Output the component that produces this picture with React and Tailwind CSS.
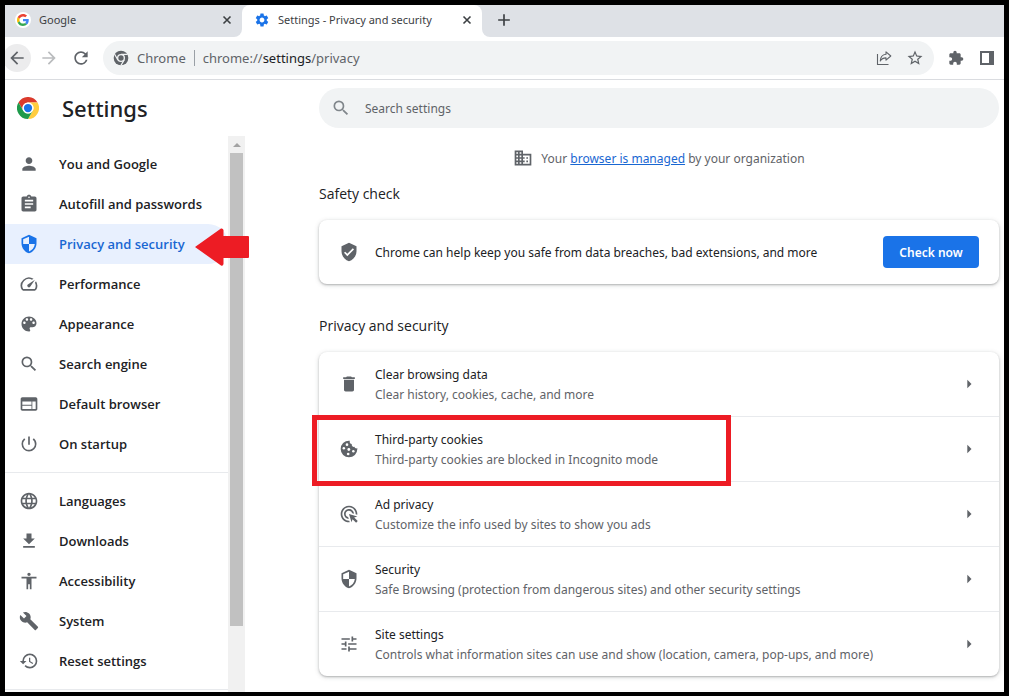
import { useState } from "react";
import clsx from "clsx";
import {
  MdAccessibility,
  MdAdd,
  MdAdsClick,
  MdArrowBack,
  MdArrowForward,
  MdArrowRight,
  MdAssignment,
  MdBuild,
  MdDelete,
  MdDomain,
  MdExtension,
  MdFileDownload,
  MdLanguage,
  MdPerson,
  MdPowerSettingsNew,
  MdRefresh,
  MdRestore,
  MdSearch,
  MdSecurity,
  MdSettings,
  MdSpeed,
  MdStarBorder,
  MdTune,
  MdVerifiedUser,
  MdWeb,
} from "react-icons/md";

const PaletteIcon = ({ className }) => (
  <svg viewBox="0 0 24 24" fill="currentColor" className={className}>
    <path d="M12 3c-4.97 0-9 4.03-9 9s4.03 9 9 9c.83 0 1.5-.67 1.5-1.5 0-.39-.15-.74-.39-1.01-.23-.26-.38-.61-.38-.99 0-.83.67-1.5 1.5-1.5H16c2.76 0 5-2.24 5-5 0-4.42-4.03-8-9-8zm-5.5 9c-.83 0-1.5-.67-1.5-1.5S5.67 9 6.5 9 8 9.67 8 10.5 7.33 12 6.5 12zm3-4C8.67 8 8 7.33 8 6.5S8.67 5 9.5 5s1.5.67 1.5 1.5S10.33 8 9.5 8zm5 0c-.83 0-1.5-.67-1.5-1.5S13.67 5 14.5 5s1.5.67 1.5 1.5S15.33 8 14.5 8zm3 4c-.83 0-1.5-.67-1.5-1.5S16.67 9 17.5 9s1.5.67 1.5 1.5-.67 1.5-1.5 1.5z" />
  </svg>
);

const CookieIcon = ({ className }) => (
  <svg viewBox="0 0 24 24" fill="currentColor" className={className}>
    <path d="M12 2A10 10 0 1 0 22 12V11.200C20.500 11.800 18.800 11 18.600 9.400C16.500 9.800 14.800 8 15.300 6C13.500 5.800 12.300 4 13 2.050Q12.500 2 12 2z" />
    <g fill="#fff">
      <circle cx="9.600" cy="6.800" r="1.600" />
      <circle cx="5.800" cy="11" r="1.500" />
      <circle cx="11.800" cy="12.600" r="1.700" />
      <circle cx="17.200" cy="14.600" r="1.500" />
      <circle cx="11" cy="18" r="1.600" />
    </g>
  </svg>
);

const CloseIcon = () => (
  <svg viewBox="0 0 12 12" className="size-3" fill="none" stroke="currentColor" strokeWidth="1.6">
    <path d="M2.500 2.500L9.500 9.500M9.500 2.500L2.500 9.500" />
  </svg>
);

const GoogleLogo = () => (
  <svg viewBox="0 0 48 48" className="size-3">
    <path fill="#EA4335" d="M24 9.5c3.54 0 6.71 1.22 9.21 3.6l6.85-6.85C35.9 2.38 30.47 0 24 0 14.62 0 6.51 5.38 2.56 13.22l7.98 6.19C12.43 13.72 17.74 9.5 24 9.5z" />
    <path fill="#4285F4" d="M46.98 24.55c0-1.57-.15-3.09-.38-4.55H24v9.02h12.94c-.58 2.96-2.26 5.48-4.78 7.18l7.73 6c4.51-4.18 7.09-10.36 7.09-17.65z" />
    <path fill="#FBBC05" d="M10.53 28.59c-.48-1.45-.76-2.99-.76-4.59s.27-3.14.76-4.59l-7.98-6.19C.92 16.46 0 20.12 0 24c0 3.88.92 7.54 2.56 10.78l7.97-6.19z" />
    <path fill="#34A853" d="M24 48c6.48 0 11.93-2.13 15.89-5.81l-7.73-6c-2.15 1.45-4.92 2.3-8.16 2.3-6.26 0-11.57-4.22-13.47-9.91l-7.98 6.19C6.51 42.62 14.62 48 24 48z" />
  </svg>
);

const ChromeLogo = () => (
  <svg viewBox="0 0 48 48" className="size-[22px]">
    <path fill="#DB3A2C" d="M3.2 12A24 24 0 0 1 44.8 12H24A12 12 0 0 0 13.6 30z" />
    <path fill="#FFCD40" d="M44.8 12A24 24 0 0 1 24 48L34.4 30A12 12 0 0 0 24 12z" />
    <path fill="#1E9A4B" d="M24 48A24 24 0 0 1 3.2 12L13.6 30A12 12 0 0 0 34.4 30z" />
    <circle cx="24" cy="24" r="12" fill="#fff" />
    <circle cx="24" cy="24" r="9" fill="#1A73E8" />
  </svg>
);

const ChromeMark = () => (
  <svg viewBox="0 0 48 48" className="size-4">
    <circle cx="24" cy="24" r="22" fill="#5f6368" />
    <path d="M24 13H44M14.5 29.5L4.5 12.2M33.5 29.5L23.5 46.8" stroke="#f1f3f4" strokeWidth="3.5" />
    <circle cx="24" cy="24" r="12" fill="#f1f3f4" />
    <circle cx="24" cy="24" r="8" fill="#5f6368" />
  </svg>
);

const ShareIcon = () => (
  <svg viewBox="0 0 16 16" className="size-4" fill="none" stroke="#5f6368" strokeWidth="1.1">
    <path d="M1.5 4V14.500H12.500" />
    <path d="M10 1.800L14.800 6L10 10.200V7.900C7.500 7.900 5.600 8.800 4.300 11C4.400 7.300 6.300 4.600 10 4.200z" strokeLinejoin="round" />
  </svg>
);

const SidePanelIcon = () => (
  <svg viewBox="0 0 14 14" className="size-3.5" fill="#5f6368">
    <path fillRule="evenodd" d="M0 0h14v14H0zM2 2v10h7V2z" />
  </svg>
);

const menu = [
  { label: "You and Google", icon: MdPerson },
  { label: "Autofill and passwords", icon: MdAssignment },
  { label: "Privacy and security", icon: MdSecurity },
  { label: "Performance", icon: MdSpeed },
  { label: "Appearance", icon: PaletteIcon },
  { label: "Search engine", icon: MdSearch },
  { label: "Default browser", icon: MdWeb },
  { label: "On startup", icon: MdPowerSettingsNew },
];

const advancedMenu = [
  { label: "Languages", icon: MdLanguage },
  { label: "Downloads", icon: MdFileDownload },
  { label: "Accessibility", icon: MdAccessibility },
  { label: "System", icon: MdBuild },
  { label: "Reset settings", icon: MdRestore },
];

const privacyRows = [
  { title: "Clear browsing data", text: "Clear history, cookies, cache, and more", icon: MdDelete },
  { title: "Third-party cookies", text: "Third-party cookies are blocked in Incognito mode", icon: CookieIcon, marked: true },
  { title: "Ad privacy", text: "Customize the info used by sites to show you ads", icon: MdAdsClick },
  { title: "Security", text: "Safe Browsing (protection from dangerous sites) and other security settings", icon: MdSecurity },
  { title: "Site settings", text: "Controls what information sites can use and show (location, camera, pop-ups, and more)", icon: MdTune },
];

const Tab = ({ icon, title }) => (
  <div className="flex h-8 items-center pr-[7px] pb-0.5 pl-2.5 text-[11px] text-[#3c4043]">
    <span className="mr-2 flex size-4 items-center justify-center rounded-full bg-white">{icon}</span>
    <span className="flex-1 whitespace-nowrap">{title}</span>
    <button aria-label={`Close ${title}`} className="p-0.5">
      <CloseIcon />
    </button>
  </div>
);

const TabStrip = () => (
  <div className="flex shrink-0 bg-white">
    <div className="w-[237px] rounded-br-lg bg-[#dee1e6]">
      <Tab icon={<GoogleLogo />} title="Google" />
    </div>
    <div className="w-60 bg-[#dee1e6]">
      <div className="rounded-t-lg bg-white pl-0.5">
        <Tab icon={<MdSettings className="size-4 text-[#1a73e8]" />} title="Settings - Privacy and security" />
      </div>
    </div>
    <div className="flex flex-1 items-center rounded-bl-lg bg-[#dee1e6] pb-0.5 pl-3">
      <button aria-label="New tab">
        <MdAdd className="size-5 text-[#3c4043]" />
      </button>
    </div>
  </div>
);

const Toolbar = () => (
  <div className="flex h-[43px] shrink-0 items-center border-b border-[#dadce0] bg-white pr-2.5 text-[#5f6368]">
    <button aria-label="Back" className="-ml-0.5 flex size-7 items-center justify-center rounded-full bg-[#ececed]">
      <MdArrowBack className="size-5" />
    </button>
    <button aria-label="Forward" className="ml-1.5 p-0.5 text-[#babcbe]">
      <MdArrowForward className="size-5" />
    </button>
    <button aria-label="Reload" className="ml-2 p-0.5">
      <MdRefresh className="size-5" />
    </button>
    <div className="mr-3.5 ml-2.5 flex h-[34px] flex-1 items-center rounded-full bg-[#f1f3f4] px-2.5 text-[13px]">
      <ChromeMark />
      <span className="ml-2 pt-px">Chrome</span>
      <span className="mx-2 h-4 w-px bg-[#9aa0a6]" />
      <span className="flex-1 pt-px">
        chrome://<span className="text-[#202124]">settings</span>/privacy
      </span>
      <button aria-label="Share this page" className="mr-3.5">
        <ShareIcon />
      </button>
      <button aria-label="Bookmark this tab">
        <MdStarBorder className="size-[18px]" />
      </button>
    </div>
    <button aria-label="Extensions" className="mr-4">
      <MdExtension className="size-4" />
    </button>
    <button aria-label="Side panel">
      <SidePanelIcon />
    </button>
  </div>
);

const MenuItem = ({ label, icon: Icon, active, onClick }) => (
  <li className="relative">
    <a
      href="#"
      onClick={onClick}
      className={clsx(
        "flex h-10 items-center gap-5 rounded-r-full pl-3.5 font-['Open_Sans',sans-serif] text-[13px] font-semibold whitespace-nowrap",
        active ? "bg-[#e8f0fe] text-[#1967d2]" : "text-[#202124]"
      )}
    >
      <Icon className={clsx("size-5 shrink-0", active ? "text-[#1a73e8]" : "text-[#5f6368]")} />
      <span className="pt-px">{label}</span>
    </a>
    {active && (
      <svg viewBox="0 0 54 38" className="absolute top-1 left-[190px] z-10 h-[38px] w-[54px]" fill="#ed1c24">
        <path d="M0 19L26 0.5Q28 0 28.500 2V8H53Q54 8 54 9V29Q54 30 53 30H28.500V36Q28 38.500 26 37.500z" />
      </svg>
    )}
  </li>
);

const Sidebar = () => {
  const [selected, setSelected] = useState("Privacy and security");

  const renderItem = (item) => (
    <MenuItem
      key={item.label}
      {...item}
      active={item.label === selected}
      onClick={() => setSelected(item.label)}
    />
  );

  return (
    <aside className="flex w-60 shrink-0 flex-col">
      <div className="flex h-14 shrink-0 items-center gap-[23px] pl-3">
        <ChromeLogo />
        <h1 className="text-[22px] font-medium text-[#202124]">Settings</h1>
      </div>
      <div className="flex min-h-0 flex-1">
        <nav className="flex-1">
          <ul className="py-2">{menu.map(renderItem)}</ul>
          <hr className="border-[#e8eaed]" />
          <ul className="py-2">{advancedMenu.map(renderItem)}</ul>
          <hr className="border-[#e8eaed]" />
        </nav>
        <div className="w-[17px] bg-[#f1f1f1] px-0.5">
          <div className="flex h-[17px] items-center justify-center">
            <svg viewBox="0 0 8 4" className="h-1 w-2" fill="#a3a3a3">
              <path d="M4 0L8 4H0z" />
            </svg>
          </div>
          <div className="h-[85%] bg-[#c1c1c1]" />
        </div>
      </div>
    </aside>
  );
};

const Card = ({ children }) => (
  <div className="rounded-lg bg-white shadow-[0_1px_2px_rgba(60,64,67,0.3),0_1px_5px_rgba(60,64,67,0.2)]">
    {children}
  </div>
);

const SectionTitle = ({ children }) => (
  <h2 className="mb-4 font-['Open_Sans',sans-serif] text-sm leading-5 text-[#202124]">{children}</h2>
);

const SettingsRow = ({ title, text, icon: Icon, marked }) => (
  <li className="relative border-t border-[#e8eaed] first:border-t-0">
    <button className="flex h-16 w-full items-center px-5 text-left">
      <Icon className="size-5 shrink-0 text-[#5f6368]" />
      <span className="ml-4 flex-1 pt-0.5 leading-5">
        <span className="block text-[#202124]">{title}</span>
        <span className="block text-[#5f6368]">{text}</span>
      </span>
      <MdArrowRight className="size-5 text-[#5f6368]" />
    </button>
    {marked && (
      <div className="pointer-events-none absolute -top-0.5 -bottom-[5px] -left-[7px] z-10 w-[419px] border-[5px] border-[#ed1c24]" />
    )}
  </li>
);

const Content = () => (
  <main className="min-w-0 flex-1 pt-2 pr-[5px] pl-[74px] text-xs">
    <label className="flex h-10 items-center rounded-full bg-[#f1f3f4] px-3">
      <MdSearch className="size-5 text-[#80868b]" />
      <input
        type="text"
        aria-label="Search settings"
        placeholder="Search settings"
        className="ml-3.5 flex-1 bg-transparent pt-0.5 outline-none placeholder:text-[#5f6368]"
      />
    </label>

    <div className="mt-5 flex h-5 items-center justify-center gap-2 text-[#5f6368]">
      <MdDomain className="size-5" />
      <p className="pt-0.5">
        Your{" "}
        <a href="#" className="text-[#1967d2] underline">
          browser is managed
        </a>{" "}
        by your organization
      </p>
    </div>

    <section className="mt-4">
      <SectionTitle>Safety check</SectionTitle>
      <Card>
        <div className="flex h-16 items-center px-5">
          <MdVerifiedUser className="size-5 text-[#5f6368]" />
          <p className="ml-4 flex-1 pt-0.5 text-[#202124]">
            Chrome can help keep you safe from data breaches, bad extensions, and more
          </p>
          <button className="h-8 min-w-24 rounded bg-[#1a73e8] px-3 pt-0.5 font-semibold text-white">Check now</button>
        </div>
      </Card>
    </section>

    <section className="mt-8">
      <SectionTitle>Privacy and security</SectionTitle>
      <Card>
        <ul>
          {privacyRows.map((row) => (
            <SettingsRow key={row.title} {...row} />
          ))}
        </ul>
      </Card>
    </section>
  </main>
);

export default function App() {
  return (
    <div className="h-screen bg-black px-[5px] pt-[5px] pb-1 font-['Noto_Sans',sans-serif]">
      <div className="flex h-full flex-col overflow-hidden bg-white">
        <TabStrip />
        <Toolbar />
        <div className="flex min-h-0 flex-1">
          <Sidebar />
          <Content />
        </div>
      </div>
    </div>
  );
}
